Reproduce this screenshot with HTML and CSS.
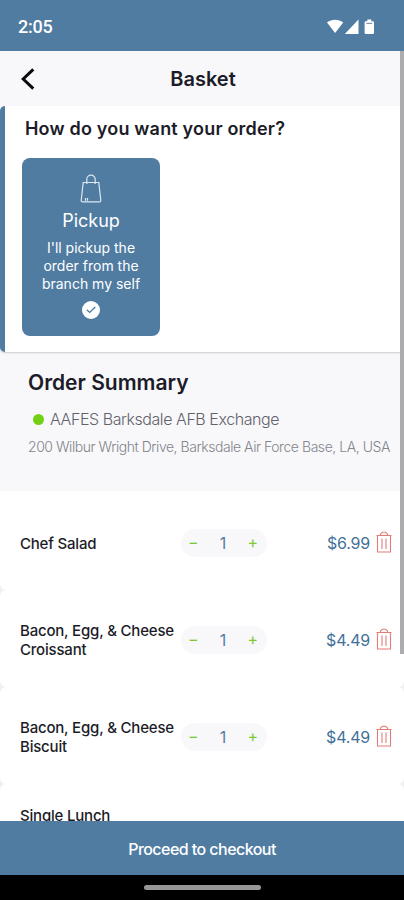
FILE: index.html
```
<!DOCTYPE html>
<html lang="en">

<head>
    <meta charset="UTF-8">
    <meta name="viewport" content="width=device-width, initial-scale=1.0">
    <title>Basket</title>
    <link rel="stylesheet" href="styles.css">
</head>

<body>
    <svg class="sprite" width="0" height="0">
        <symbol id="trash" viewBox="0 0 16 22">
            <path d="M.5 4.5h15M1.5 4.5v16.5h13V4.5M4.5 4.5V3L6.5 1.2h3L11.5 3v1.5M6 7.5v10.5M10 7.5v10.5" />
        </symbol>
    </svg>

    <div class="phone">
        <div class="status-bar">
            <span class="time">2:05</span>
            <svg class="status-icons" width="49" height="16" viewBox="0 0 49 16" fill="#fff">
                <path d="M0 3.4C4.8-.1 11.4-.1 16.2 3.4L8.1 14z" />
                <path d="M31.5 0.5V15H17.8z" />
                <path d="M40.3 0.5h4v1.7h1.5q1.2 0 1.2 1.2v10.4q0 1.2-1.2 1.2h-7q-1.2 0-1.2-1.2V3.4q0-1.2 1.2-1.2h1.5z" />
                <path d="M39.4 4.4h5.8" stroke="#7d99b8" stroke-width="1.2" />
            </svg>
        </div>

        <div class="content">
            <div class="header">
                <svg class="back" width="14" height="22" viewBox="0 0 14 22">
                    <path d="M12.3 1.3L2.2 11l10.1 9.7" />
                </svg>
                <h1>Basket</h1>
            </div>

            <div class="order-type">
                <h2>How do you want your order?</h2>
                <div class="pickup">
                    <svg class="bag" width="22" height="29" viewBox="0 0 22 29">
                        <path d="M3.2 8.5h15.6L20.8 26.3q.1 1.5-1.4 1.5H2.6q-1.5 0-1.4-1.5z" />
                        <path d="M6.8 10V5.3a4.2 4.2 0 0 1 8.4 0V10M5.5 24v2.8M7.5 24v2.8" />
                    </svg>
                    <h3>Pickup</h3>
                    <p>I'll pickup the<br>order from the<br>branch my self</p>
                    <svg class="check" width="18" height="18" viewBox="0 0 18 18">
                        <circle cx="9" cy="9" r="9" fill="#fff" />
                        <path d="M4.8 8.8l2.9 2.6 5.6-5.4" />
                    </svg>
                </div>
            </div>

            <div class="summary">
                <h2>Order Summary</h2>
                <div class="branch"><span class="dot"></span><span class="branch-name">AAFES Barksdale AFB Exchange</span></div>
                <p class="address">200 Wilbur Wright Drive, Barksdale Air Force Base, LA, USA</p>
            </div>

            <div class="items">
                <div class="item first">
                    <div class="name">Chef Salad</div>
                    <div class="qty"><span>−</span><b>1</b><span>+</span></div>
                    <div class="price">$6.99</div>
                    <svg class="trash"><use href="#trash" /></svg>
                </div>
                <div class="item">
                    <div class="name">Bacon, Egg, &amp; Cheese<br>Croissant</div>
                    <div class="qty"><span>−</span><b>1</b><span>+</span></div>
                    <div class="price">$4.49</div>
                    <svg class="trash"><use href="#trash" /></svg>
                </div>
                <div class="item">
                    <div class="name">Bacon, Egg, &amp; Cheese<br>Biscuit</div>
                    <div class="qty"><span>−</span><b>1</b><span>+</span></div>
                    <div class="price">$4.49</div>
                    <svg class="trash"><use href="#trash" /></svg>
                </div>
                <div class="item last">
                    <div class="name">Single Lunch</div>
                </div>
            </div>
            <div class="scrollbar"></div>
        </div>

        <button class="checkout">Proceed to checkout</button>
        <div class="nav-bar"><div class="handle"></div></div>
    </div>
</body>

</html>
```
FILE: styles.css
```
* {
    box-sizing: border-box;
    margin: 0;
    padding: 0;
}

body {
    font-family: Inter, "Liberation Sans", sans-serif;
    color: #1c1c28;
    background: #fff;
}

.sprite {
    position: absolute;
}

.phone {
    display: flex;
    flex-direction: column;
    width: 404px;
    height: 900px;
    overflow: hidden;
    white-space: nowrap;
}

.status-bar {
    display: flex;
    flex: none;
    justify-content: space-between;
    align-items: center;
    height: 51px;
    padding: 2px 28px 0 18px;
    background: #507ca2;
}

.time {
    font-family: Roboto, sans-serif;
    font-size: 18px;
    font-weight: 500;
    letter-spacing: -0.2px;
    color: #fff;
}

.content {
    position: relative;
    flex: 1;
    min-height: 0;
    overflow: hidden;
    background: #f8f8fb;
}

.header {
    display: flex;
    align-items: center;
    height: 55px;
    padding-left: 21px;
}

.back {
    fill: none;
    stroke: #0c0c10;
    stroke-width: 3;
}

.header h1 {
    flex: 1;
    padding: 1px 33px 0 0;
    font-size: 20px;
    font-weight: 600;
    text-align: center;
}

.order-type {
    height: 246px;
    padding: 11px 0 0 17px;
    background: #fff;
    border-left: 5px solid #507ca2;
    border-radius: 5px 0 0 5px;
    box-shadow: 0 1px 2px #ccc;
}

.order-type h2 {
    padding-left: 3px;
    font-size: 18px;
    font-weight: 600;
    line-height: 24px;
    letter-spacing: 0.19px;
}

.pickup {
    display: flex;
    flex-direction: column;
    align-items: center;
    width: 138px;
    height: 178px;
    margin-top: 17px;
    padding-top: 16px;
    color: #fff;
    background: #507ca2;
    border-radius: 8px;
}

.bag {
    fill: none;
    stroke: #dce8f3;
    stroke-width: 1.2;
}

.pickup h3 {
    margin-top: 5px;
    font-size: 18px;
    font-weight: 400;
    line-height: 26px;
}

.pickup p {
    margin-top: 5px;
    font-size: 14px;
    line-height: 18px;
    text-align: center;
}

.check {
    margin-top: 8px;
}

.check path {
    fill: none;
    stroke: #507ca2;
    stroke-width: 1.4;
}

.summary {
    height: 139px;
    padding: 17px 0 0 28px;
}

.summary h2 {
    font-size: 21px;
    font-weight: 600;
    line-height: 28px;
}

.branch {
    display: flex;
    align-items: center;
    margin-top: 10px;
    padding-left: 5px;
    font-size: 16px;
    font-weight: 300;
    line-height: 24px;
    letter-spacing: -0.44px;
    color: #62626a;
}

.dot {
    width: 11px;
    height: 11px;
    margin-right: 6px;
    border-radius: 50%;
    background: #74d014;
}

.address {
    margin-top: 6px;
    font-size: 14px;
    font-weight: 300;
    line-height: 20px;
    letter-spacing: -0.45px;
    color: #84848a;
}

.items {
    background: #f0f0f2;
}

.item {
    display: flex;
    align-items: center;
    height: 97px;
    padding: 3px 12px 0 20px;
    background: #fff;
    border-radius: 6px;
}

.item.first {
    height: 99px;
    padding-top: 5px;
    border-radius: 0 0 6px 6px;
}

.item.last {
    align-items: flex-start;
    padding-top: 22px;
}

.name {
    width: 161px;
    font-size: 15px;
    font-weight: 500;
    line-height: 19px;
    letter-spacing: -0.2px;
}

.qty {
    display: flex;
    justify-content: space-between;
    align-items: center;
    width: 86px;
    height: 28px;
    padding: 0 9px 0 7px;
    background: #f8f8fb;
    border-radius: 14px;
}

.qty span {
    padding-bottom: 2px;
    font-size: 16px;
    color: #7ccb35;
}

.qty b {
    font-size: 16px;
    font-weight: 400;
    color: #507ca2;
}

.price {
    flex: 1;
    padding-right: 6px;
    font-size: 16px;
    letter-spacing: -0.2px;
    color: #42709a;
    text-align: right;
}

.trash {
    width: 16px;
    height: 22px;
    margin-top: -2px;
    fill: none;
    stroke: #e27d78;
    stroke-width: 1.1;
}

.scrollbar {
    position: absolute;
    top: 0;
    right: 0;
    width: 4px;
    height: 603px;
    background: #acacae;
}

.checkout {
    flex: none;
    height: 54px;
    padding-top: 2px;
    border: none;
    font-family: inherit;
    font-size: 16px;
    font-weight: 500;
    letter-spacing: -0.55px;
    color: #fff;
    background: #507ca2;
}

.nav-bar {
    display: flex;
    flex: none;
    justify-content: center;
    align-items: center;
    height: 25px;
    background: #000;
}

.handle {
    width: 117px;
    height: 5px;
    border-radius: 3px;
    background: #969696;
}
```
